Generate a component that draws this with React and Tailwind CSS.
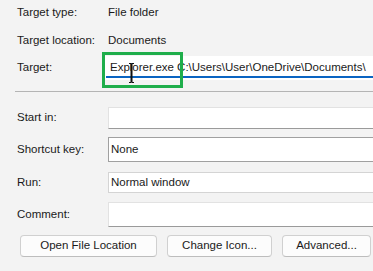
import React from "react";

function Label({ children }) {
  return <div className="w-[91px] shrink-0 text-[#1a1a1a]">{children}</div>;
}

export default function App() {
  return (
    <div
      className="relative w-[373px] h-[271px] overflow-hidden bg-[#f3f3f3] pl-[17px] text-[11.5px] leading-none text-[#1a1a1a]"
      style={{ fontFamily: "'Liberation Sans', Arial, sans-serif" }}
    >
      <div className="flex items-center h-[18px] mt-[4px]">
        <Label>Target type:</Label>
        <div>File folder</div>
      </div>
      <div className="flex items-center h-[18px] mt-[10px]">
        <Label>Target location:</Label>
        <div>Documents</div>
      </div>
      <div className="flex items-center h-[24px] mt-[6px]">
        <div className="w-[86px] shrink-0">Target:</div>
        <div className="relative flex items-center h-[24px] w-[290px] shrink-0 overflow-hidden bg-white pl-[7px] whitespace-nowrap">
          Explorer.exe C:\Users\User\OneDrive\Documents\
          <div className="absolute left-[3px] right-0 bottom-[2px] h-[2px] bg-[#0a64c2]" />
        </div>
      </div>
      <div className="mt-[11px] h-px w-[360px] bg-[#b4b4b4] -ml-[2px]" />
      <div className="flex items-center h-[22px] mt-[15px]">
        <Label>Start in:</Label>
        <div className="h-[22px] w-[280px] shrink-0 bg-white border border-[#e2e2e2] border-b-[#9a9a9a]" />
      </div>
      <div className="flex items-center h-[25px] mt-[8px]">
        <Label>Shortcut key:</Label>
        <div className="flex items-center h-[25px] w-[280px] shrink-0 bg-white border border-[#a0a0a0] pl-[2px]">
          None
        </div>
      </div>
      <div className="flex items-center h-[21px] mt-[10px]">
        <Label>Run:</Label>
        <div className="flex items-center h-[21px] w-[280px] shrink-0 bg-white border border-[#d4d4d4] pl-[2px]">
          Normal window
        </div>
      </div>
      <div className="flex items-center h-[25px] mt-[9px]">
        <Label>Comment:</Label>
        <div className="h-[25px] w-[280px] shrink-0 bg-white border border-[#e2e2e2] border-b-[#9a9a9a]" />
      </div>
      <div className="flex items-center mt-[8px] ml-[3px] gap-[10px]">
        <button className="h-[22px] w-[137px] shrink-0 rounded-[4px] border border-[#d0d0d0] border-b-[#bdbdbd] bg-[#fcfcfc] text-[11.5px]">
          Open File Location
        </button>
        <button className="h-[22px] w-[105px] shrink-0 rounded-[4px] border border-[#d0d0d0] border-b-[#bdbdbd] bg-[#fcfcfc] text-[11.5px]">
          Change Icon...
        </button>
        <button className="h-[22px] w-[89px] shrink-0 rounded-[4px] border border-[#d0d0d0] border-b-[#bdbdbd] bg-[#fcfcfc] text-[11.5px]">
          Advanced...
        </button>
      </div>

      {/* green highlight box */}
      <div className="absolute left-[102px] top-[52px] w-[81px] h-[36px] border-[3px] border-[#1fae4b] pointer-events-none" />
      {/* text cursor I-beam */}
      <svg className="absolute left-[128px] top-[63px]" width="7" height="20" viewBox="0 0 7 20">
        <path d="M1 0.5h2v19h-2M6 0.5h-2v19h2M3.5 0.5v19" stroke="#111" strokeWidth="1" fill="none" />
      </svg>
    </div>
  );
}
